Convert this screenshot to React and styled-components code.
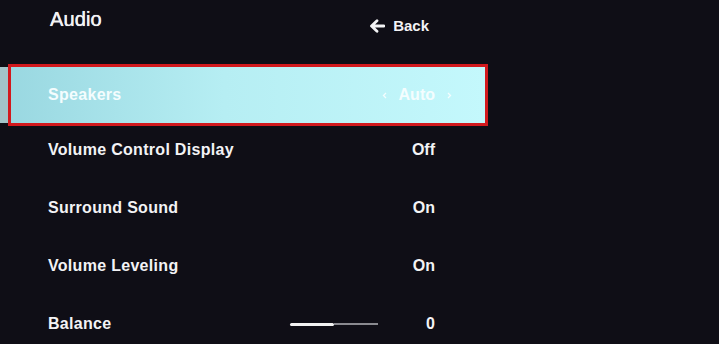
import React from "react";
import styled, { createGlobalStyle } from "styled-components";

const Global = createGlobalStyle`
  html, body { margin: 0; padding: 0; background: #0f0e16; }
  body { font-family: "Liberation Sans", Arial, sans-serif; }
`;

const Screen = styled.div`
  width: 719px;
  height: 344px;
  overflow: hidden;
  background: #0f0e16;
  color: #f3f3f5;
`;

const Panel = styled.div`
  width: 488px;
  display: flex;
  flex-direction: column;
`;

const Header = styled.div`
  height: 64px;
  display: flex;
  justify-content: space-between;
  align-items: flex-start;
  padding: 0 59px 0 50px;
  box-sizing: border-box;
`;

const Title = styled.div`
  font-size: 20px;
  line-height: 23px;
  padding-top: 8px;
  letter-spacing: 0.1px;
  text-shadow: 0 0 0.6px #f3f3f5, 0 0 1px rgba(255, 255, 255, 0.6);
`;

const BackButton = styled.div`
  display: flex;
  align-items: center;
  gap: 8px;
  padding-top: 17px;
  font-size: 15px;
  line-height: 18px;
  font-weight: 700;
`;

const SelectedWrap = styled.div`
  display: flex;
  align-items: center;
  height: 62px;
`;

const Strip = styled.div`
  width: 8px;
  height: 56px;
  background: #a3c4c9;
`;

const SelectedBox = styled.div`
  flex: 1;
  height: 62px;
  box-sizing: border-box;
  border: 3px solid #d2191d;
  background: linear-gradient(90deg, #9ad8e1 0%, #b6eef3 45%, #c4f8fc 100%);
  display: flex;
  align-items: center;
  justify-content: space-between;
  padding: 0 33px 0 37px;
`;

const Row = styled.div`
  height: 58px;
  box-sizing: border-box;
  padding: 14px 53px 0 48px;
  display: flex;
  align-items: flex-start;
  gap: 12px;
`;

const Label = styled.div`
  font-size: 16px;
  line-height: 20px;
  font-weight: 700;
  letter-spacing: 0.3px;
  color: ${(p) => (p.$onLight ? "#f4fdfe" : "#f3f3f5")};
  flex: 1;
`;

const Value = styled.div`
  font-size: 16px;
  line-height: 20px;
  font-weight: 700;
  text-align: right;
  min-width: ${(p) => (p.$compact ? "0" : "40px")};
  color: ${(p) => (p.$onLight ? "#f4fdfe" : "#f3f3f5")};
`;

const Chooser = styled.div`
  display: flex;
  align-items: center;
  gap: 12px;
  color: #f4fdfe;
`;

const Slider = styled.div`
  width: 88px;
  height: 20px;
  display: flex;
  align-items: center;
  margin-right: 5px;
`;

const SliderFill = styled.div`
  height: 3px;
  background: #f2f2f2;
  border-radius: 2px;
`;

const SliderTrack = styled.div`
  flex: 1;
  height: 2px;
  background: #8a8a90;
`;

const Arrow = () => (
  <svg width="16" height="14" viewBox="0 0 16 14">
    <path d="M15 7H3.5M8 1.8L2.5 7L8 12.2" stroke="#f3f3f5" strokeWidth="2.8" fill="none" strokeLinecap="round" strokeLinejoin="round" />
  </svg>
);

const Chevron = ({ dir }) => (
  <svg width="5" height="7" viewBox="0 0 5 7">
    <path d={dir === "left" ? "M4 1L1.5 3.5L4 6" : "M1 1L3.5 3.5L1 6"} stroke="#f4fdfe" strokeWidth="1.3" fill="none" />
  </svg>
);

const rows = [
  { label: "Volume Control Display", value: "Off" },
  { label: "Surround Sound", value: "On" },
  { label: "Volume Leveling", value: "On" },
  { label: "Balance", value: "0", slider: 0.5 },
];

export default function App() {
  return (
    <>
      <Global />
      <Screen>
        <Panel>
          <Header>
            <Title>Audio</Title>
            <BackButton>
              <Arrow />
              Back
            </BackButton>
          </Header>
          <SelectedWrap>
            <Strip />
            <SelectedBox>
              <Label $onLight>Speakers</Label>
              <Chooser>
                <Chevron dir="left" />
                <Value $onLight $compact>Auto</Value>
                <Chevron dir="right" />
              </Chooser>
            </SelectedBox>
          </SelectedWrap>
          {rows.map((r) => (
            <Row key={r.label}>
              <Label>{r.label}</Label>
              {r.slider != null && (
                <Slider>
                  <SliderFill style={{ width: `${r.slider * 100}%` }} />
                  <SliderTrack />
                </Slider>
              )}
              <Value>{r.value}</Value>
            </Row>
          ))}
        </Panel>
      </Screen>
    </>
  );
}
